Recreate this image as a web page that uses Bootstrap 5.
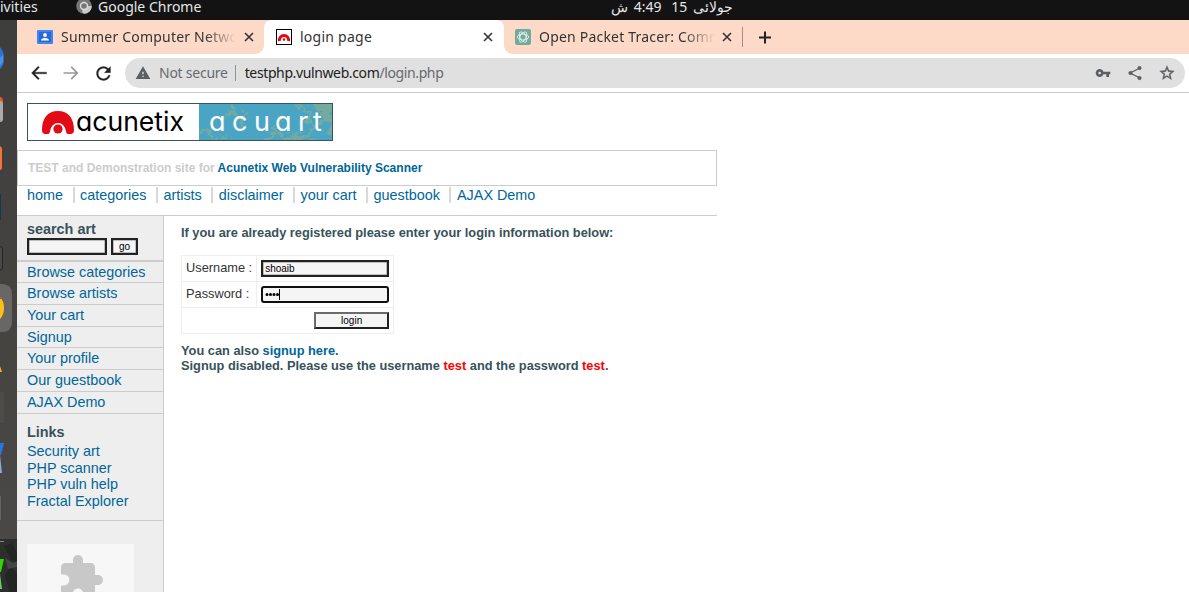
<!DOCTYPE html>
<html lang="en">
<head>
<meta charset="utf-8">
<title>login page</title>
<meta name="viewport" content="width=device-width, initial-scale=1">
<link href="https://cdn.jsdelivr.net/npm/bootstrap@5.3.0/dist/css/bootstrap.min.css" rel="stylesheet">
<style>
html,body{height:100%;overflow:hidden}
body{font-family:"Liberation Sans",Arial,sans-serif;font-size:14.4px;line-height:17px;color:#38525a;background:#fff}
svg{display:block;flex:none}
a{color:#069;text-decoration:none}
.ui{font-family:"Noto Sans","Open Sans",sans-serif;font-size:14px;line-height:20px;white-space:nowrap}
.topbar{height:20px;background:#131313;color:#e6e6e6}
.topbar>*{flex:none}
.topbar .lift{line-height:14px;margin-top:0}
.clock{margin-left:408px;width:122px}
.dock{width:17px;background:#434240}
.tabs{height:34px;background:#fddac8;color:#333}
.tab-item{height:34px;width:240px;padding:0 10px 0 12px}
.tab-on{background:#fff;border-radius:8px 8px 0 0;color:#333}
.tab-name{overflow:hidden;flex:1;margin-left:8px}
.fade-end{-webkit-mask-image:linear-gradient(90deg,#000 82%,transparent 100%);mask-image:linear-gradient(90deg,#000 82%,transparent 100%)}
.tab-foot-l{background:radial-gradient(circle at 0 0,transparent 7.5px,#fff 8px) right bottom/8px 8px no-repeat}
.tab-foot-r{background:radial-gradient(circle at 100% 0,transparent 7.5px,#fff 8px) left bottom/8px 8px no-repeat}
.toolbar{height:39px;border-bottom:1px solid #ccc;padding:4px 4px 4px 12px}
.omni{height:30px;border-radius:15px;background:#e0e0e0;color:#666a6e;margin-left:11px;padding:0 8px}
.omni-sep{width:1px;height:16px;background:#909396;margin:0 9px 0 8px}
.site{width:700px}
.logo{margin:10px 0 9px 10px}
.notice{height:36px;border:1px solid #ccc;padding:0 10px;font-size:12px;font-weight:700;color:#ccc;line-height:34px}
.menu-row{height:30px;padding:1px 0 0 10px;border-bottom:1px solid #ccc}
.menu-row a{height:16px;padding-right:9.500px;margin-right:5.500px;border-right:2px solid #d8d8d8}
.menu-row a:last-child{border:0}
.side{width:147px;background:#eee;border-right:1px solid #ccc;height:377px}
.search-box{height:46px;border-bottom:2px solid #ccc;padding:5px 0 0 10px}
.side-list a{display:block;height:21.83px;padding:2px 0 0 10px;border-bottom:1px solid #ccc}
.side-list a:first-child{height:21px}
.field{height:17px;border:2px solid;border-color:#6b6b6b #222 #222 #6b6b6b;background:#f5f5f5;font-size:10px;line-height:13px;color:#000;padding:0 2px;border-radius:0}
.dark-field{border-color:#222;box-shadow:inset 0 0 0 .5px #888}
.links-box{height:107px;padding:10px 0 0 10px;border-bottom:1px solid #ccc;line-height:16.8px}
.plug{width:107px;height:60px;margin:23px 0 0 10px;background:#f7f7f7;padding:9px 0 0 30px;overflow:hidden}
.story{padding:9px 0 0 17px;font-size:12.8px;line-height:15px;font-weight:700}
.login-grid{width:213px;border-collapse:collapse;margin:15px 0 9px;font-weight:400;color:#333}
.login-grid td{border:1px solid #eee;height:26px;padding:0 4px;vertical-align:middle;white-space:nowrap}
.login-grid td:first-child:not([colspan]){padding-bottom:2px}
.focus-field{border:2px solid #101010;border-radius:3px}
.warn-word{color:red}
</style>
</head>
<body class="d-flex flex-column">
<header class="topbar ui d-flex align-items-start">
  <span class="lift" style="width:76px">ivities</span>
  <svg width="16" height="20" viewBox="0 0 16 20"><circle cx="8" cy="6" r="7.8" fill="#777"/><path d="M8 6h7.8A7.8 7.8 0 0 1 8 13.8L6 12z" fill="#c8c8c8"/><circle cx="8" cy="6" r="4.2" fill="#ddd"/><circle cx="8" cy="6" r="2.8" fill="#777"/></svg>
  <span class="lift" style="margin-left:6px;width:105px">Google Chrome</span>
  <div class="clock lift d-flex justify-content-between" dir="rtl"><span>جولائی</span><span>15</span><span style="margin-right:4px">4:49</span><span>ش</span></div>
</header>
<div class="d-flex flex-grow-1 overflow-hidden">
  <aside class="dock flex-shrink-0">
    <svg width="17" height="572" viewBox="0 20 17 572">
      <defs><linearGradient id="dk" x2="0" y2="1"><stop offset="0" stop-color="#3e3e3d"/><stop offset=".5" stop-color="#454340"/><stop offset="1" stop-color="#4b4a48"/></linearGradient></defs>
      <rect y="20" width="17" height="572" fill="url(#dk)"/>
      <path d="M0 47q4 4 4 11.500t-4 10.500z" fill="#2874cf"/><path d="M0 58l3-4v8l-3 4z" fill="#4d91df"/>
      <path d="M0 97h1q2 1 2 4v3H0z" fill="#e95420"/><path d="M0 101q3 0 3 3v15q0 3-3 3z" fill="#aaa"/>
      <path d="M0 146q2 1 2 3v18q0 3-2 3z" fill="#f37433"/>
      <path d="M0 194h1v26H0z" fill="#12394e"/>
      <path d="M0 246.500q2.500 0 2.500 2.500v18q0 3-2.500 3" fill="#484848" stroke="#242424"/>
      <path d="M0 284h2q10 0 10 10v28q0 10-10 10H0z" fill="#686765"/><path d="M0 297q4 4 4 11t-4 11z" fill="#fbc116"/><path d="M0 297l2 2H0z" fill="#e33b2e"/>
      <path d="M0 366l2 6H0z" fill="#ffae12"/>
      <path d="M0 392h4v31H0z" fill="#4d4c4b"/>
      <path d="M0 443h4L1 455H0z" fill="#2676e9"/><path d="M0 455l2 18H0z" fill="#91a5db"/>
      <path d="M0 496h1v24H0z" fill="#656463"/>
      <rect y="539" width="17" height="53" fill="#2d2f2f"/><path d="M0 541.500h4" stroke="#888"/>
      <path d="M4 546l8-3 5 10v10l-6-3zM5 575l5-9 7 8v18H9z" fill="#222724"/><path d="M5 558l8 5 4-2v6l-9 2z" fill="#424544"/>
      <path d="M0 559h4L1 572H0z" fill="#35d400"/><path d="M0 574l2 15H0z" fill="#6bcf65"/>
    </svg>
  </aside>
  <main class="flex-grow-1">
    <div class="tabs ui d-flex align-items-center">
      <div class="tab-item tab-foot-l d-flex align-items-center" style="width:247px;padding-left:20px;padding-right:9px">
        <svg width="16" height="14"><rect width="16" height="14" rx="1" fill="#4184f3"/><path d="M2 2h12v10H2z" fill="#2869d8"/><circle cx="8" cy="5" r="1.900" fill="#fff"/><path d="M4 10.500q0-2.500 4-2.500t4 2.500z" fill="#fff"/></svg>
        <span class="tab-name fade-end" style="flex:0 0 175px;letter-spacing:.2px">Summer Computer Netwo</span>
        <svg class="ms-auto" width="12" height="12" viewBox="0 0 12 12"><path d="M2 2l8 8M10 2l-8 8" stroke="#333" stroke-width="1.600"/></svg>
      </div>
      <div class="tab-item tab-on d-flex align-items-center">
        <svg width="16" height="16"><rect x=".5" y=".5" width="15" height="15" fill="#fff" stroke="#000"/><path d="M3.500 12A4.600 4.600 0 1 1 12.500 12" fill="none" stroke="#e30a16" stroke-width="3"/><circle cx="8" cy="10.500" r="1.300" fill="#e30a16"/></svg>
        <span class="tab-name" style="letter-spacing:.25px">login page</span>
        <svg width="12" height="12" viewBox="0 0 12 12"><path d="M2 2l8 8M10 2l-8 8" stroke="#333" stroke-width="1.600"/></svg>
      </div>
      <div class="tab-item tab-foot-r d-flex align-items-center" style="padding-left:11px;padding-right:9px;width:238px">
        <svg width="16" height="16" viewBox="0 0 16 16"><rect width="16" height="16" rx="2" fill="#74aa9c"/><g fill="none" stroke="#e6f0ed" stroke-width=".9"><ellipse cx="8" cy="8" rx="5.600" ry="3"/><ellipse cx="8" cy="8" rx="5.600" ry="3" transform="rotate(60 8 8)"/><ellipse cx="8" cy="8" rx="5.600" ry="3" transform="rotate(120 8 8)"/></g></svg>
        <span class="tab-name fade-end" style="flex:0 0 176px;letter-spacing:.2px">Open Packet Tracer: Comm</span>
        <svg class="ms-auto" width="12" height="12" viewBox="0 0 12 12"><path d="M2 2l8 8M10 2l-8 8" stroke="#333" stroke-width="1.600"/></svg>
      </div>
      <div style="width:1px;height:20px;background:#a58f85"></div>
      <svg style="margin-left:16px" width="13" height="13"><path d="M6 .5v12M0 6.500h12" stroke="#222" stroke-width="2"/></svg>
    </div>
    <div class="toolbar ui d-flex align-items-center">
      <svg width="20" height="20" viewBox="0 0 24 24" fill="#222"><path d="M21 11H6.830l5.590-5.590L11 4l-8 8 8 8 1.410-1.410L6.830 13H21v-2z" stroke="#222" stroke-width=".4"/></svg>
      <svg style="margin-left:12px" width="20" height="20" viewBox="0 0 24 24" fill="#999"><path transform="matrix(-1 0 0 1 24 0)" d="M21 11H6.830l5.590-5.590L11 4l-8 8 8 8 1.410-1.410L6.830 13H21v-2z"/></svg>
      <svg style="margin-left:12px" width="21" height="21" viewBox="0 0 24 24" fill="#222"><path stroke="#222" stroke-width=".3" d="M17.650 6.350C16.200 4.900 14.210 4 12 4c-4.420 0-7.990 3.580-7.990 8s3.570 8 7.990 8c3.730 0 6.840-2.550 7.730-6h-2.080c-.82 2.330-3.040 4-5.650 4-3.310 0-6-2.690-6-6s2.690-6 6-6c1.660 0 3.140.69 4.220 1.780L13 11h7V4l-2.350 2.350z"/></svg>
      <div class="omni d-flex align-items-center flex-grow-1">
        <svg style="margin:0 8px 0 2px" width="16" height="16" viewBox="0 0 24 24" fill="#5b5e62"><path d="M1 21h22L12 2 1 21zm12-3h-2v-2h2v2zm0-4h-2v-4h2v4z"/></svg>
        <span style="letter-spacing:-.25px">Not secure</span><span class="omni-sep" style="margin-left:7px"></span>
        <span style="letter-spacing:-.38px"><span style="color:#222">testphp.vulnweb.com</span>/login.php</span>
        <svg class="ms-auto" width="16" height="16" viewBox="0 0 24 24" fill="#5b5e62"><path d="M12.650 10C11.830 7.670 9.610 6 7 6c-3.310 0-6 2.690-6 6s2.690 6 6 6c2.610 0 4.830-1.670 5.650-4H17v4h4v-4h2v-4H12.650zM7 14c-1.100 0-2-.9-2-2s.9-2 2-2 2 .9 2 2-.9 2-2 2z"/></svg>
        <svg style="margin-left:16px" width="16" height="16" fill="#5b5e62" stroke="#5b5e62"><path d="M13 3L3 8l10 5" fill="none" stroke-width="1.300"/><circle cx="12.500" cy="3" r="1.600"/><circle cx="3.500" cy="8" r="1.600"/><circle cx="12.500" cy="13" r="1.600"/></svg>
        <svg style="margin:0 2px 0 16px" width="16" height="16" viewBox="1 1 22 22" fill="#5b5e62"><path stroke="#5b5e62" stroke-width=".5" d="M22 9.240l-7.190-.62L12 2 9.190 8.630 2 9.240l5.460 4.730L5.820 21 12 17.270 18.180 21l-1.630-7.030L22 9.240zM12 15.400l-3.760 2.270 1-4.280-3.320-2.880 4.380-.38L12 6.100l1.710 4.040 4.380.38-3.320 2.880 1 4.280L12 15.400z"/></svg>
      </div>
    </div>
    <div class="site">
      <svg class="logo" width="306" height="38">
        <defs><filter id="jag" x="-10%" y="-10%" width="120%" height="120%"><feTurbulence type="fractalNoise" baseFrequency=".22" numOctaves="2" seed="4"/><feDisplacementMap in="SourceGraphic" scale="11" xChannelSelector="R" yChannelSelector="G"/></filter><clipPath id="art"><rect x="172" y="1" width="133" height="36"/></clipPath></defs>
        <rect x=".5" y=".5" width="305" height="37" fill="#fff" stroke="#3b5360"/>
        <g clip-path="url(#art)"><rect x="172" width="134" height="38" fill="#4aa5c5"/>
        <g filter="url(#jag)" fill="none" stroke="#74ab9f" stroke-width="3" stroke-linecap="round"><path d="M206 0l-2 9-5 3M204 9l9 5 3 8M213 14l6-4M172 28l8-1 3 7M180 27l6 8 5 4M196 38l2-6M240 38l7-9 6 1M247 29l1-7M253 30l7 8M253 13l2 4M270 0l6 7 7 2M283 9l-3 9 8 6M288 24l8-6M288 24l-9 9M270 38l9-5 10 5"/><path stroke-width="8" d="M304 0l-6 12 10 8-4 10M290 2l8 2M262 37l6-3"/></g></g>
        <path d="M15 27C15 15 21 8 31 8s16 7 16 19q0 4-3.500 4H41q-1.500 0-2-2.500Q37.500 20 31 20t-8 8.500q-.5 2.500-2 2.500h-2.500Q15 31 15 27z" fill="#e30a16"/><circle cx="31" cy="26" r="4.600" fill="#e30a16"/>
        <text x="49" y="28" textLength="108" lengthAdjust="spacingAndGlyphs" font-family="Inter,sans-serif" font-size="27" style="font-feature-settings:'cv11'" fill="#000">acunetix</text>
        <text y="28" x="182 205 227 248 271 286" font-family="Inter,sans-serif" font-size="27" style="font-feature-settings:'cv11'" fill="#fff">acuart</text>
      </svg>
      <div class="notice">TEST and Demonstration site for <a href="#">Acunetix Web Vulnerability Scanner</a></div>
      <nav class="menu-row d-flex"><a href="#">home</a><a href="#">categories</a><a href="#">artists</a><a href="#">disclaimer</a><a href="#">your cart</a><a href="#">guestbook</a><a href="#">AJAX Demo</a></nav>
      <div class="d-flex">
        <aside class="side flex-shrink-0">
          <div class="search-box"><div class="fw-bold">search art</div><div class="d-flex"><input class="field dark-field" style="width:80px;margin-right:4px" aria-label="search art"><button class="field dark-field" style="width:27px">go</button></div></div>
          <nav class="side-list"><a href="#">Browse categories</a><a href="#">Browse artists</a><a href="#">Your cart</a><a href="#">Signup</a><a href="#">Your profile</a><a href="#">Our guestbook</a><a href="#">AJAX Demo</a></nav>
          <div class="links-box d-flex flex-column"><strong style="margin-bottom:2px">Links</strong><a href="#">Security art</a><a href="#">PHP scanner</a><a href="#">PHP vuln help</a><a href="#">Fractal Explorer</a></div>
          <div class="plug"><svg width="48" height="48" viewBox="0 0 24 24" fill="#c8c8c8"><path d="M20.500 11H19V7c0-1.100-.9-2-2-2h-4V3.500C13 2.120 11.880 1 10.500 1S8 2.120 8 3.500V5H4c-1.100 0-1.990.9-1.990 2v3.800H3.500c1.490 0 2.700 1.210 2.700 2.700s-1.210 2.700-2.700 2.700H2V20c0 1.100.9 2 2 2h3.800v-1.500c0-1.490 1.210-2.700 2.700-2.700 1.490 0 2.700 1.210 2.700 2.700V22H17c1.100 0 2-.9 2-2v-4h1.500c1.380 0 2.500-1.120 2.500-2.500S21.880 11 20.500 11z"/></svg></div>
        </aside>
        <section class="story">
          <div>If you are already registered please enter your login information below:</div>
          <table class="login-grid">
            <tr><td style="width:75px">Username :</td><td><input class="field dark-field d-block" style="width:128px" value="shoaib" aria-label="Username"></td></tr>
            <tr><td>Password :</td><td><div class="field focus-field d-flex align-items-center" style="width:128px"><svg width="16" height="13"><g fill="#000"><circle cx="2" cy="6.500" r="1.500"/><circle cx="5.500" cy="6.500" r="1.500"/><circle cx="9" cy="6.500" r="1.500"/><circle cx="12.500" cy="6.500" r="1.500"/></g><path d="M14.500 1v11" stroke="#000"/></svg></div></td></tr>
            <tr><td colspan="2"><button class="field d-block ms-auto" style="width:75px">login</button></td></tr>
          </table>
          <div>You can also <a href="#">signup here</a>.</div>
          <div>Signup disabled. Please use the username <span class="warn-word">test</span> and the password <span class="warn-word">test</span>.</div>
        </section>
      </div>
    </div>
  </main>
</div>
<script src="https://cdn.jsdelivr.net/npm/bootstrap@5.3.0/dist/js/bootstrap.bundle.min.js"></script>
</body>
</html>
